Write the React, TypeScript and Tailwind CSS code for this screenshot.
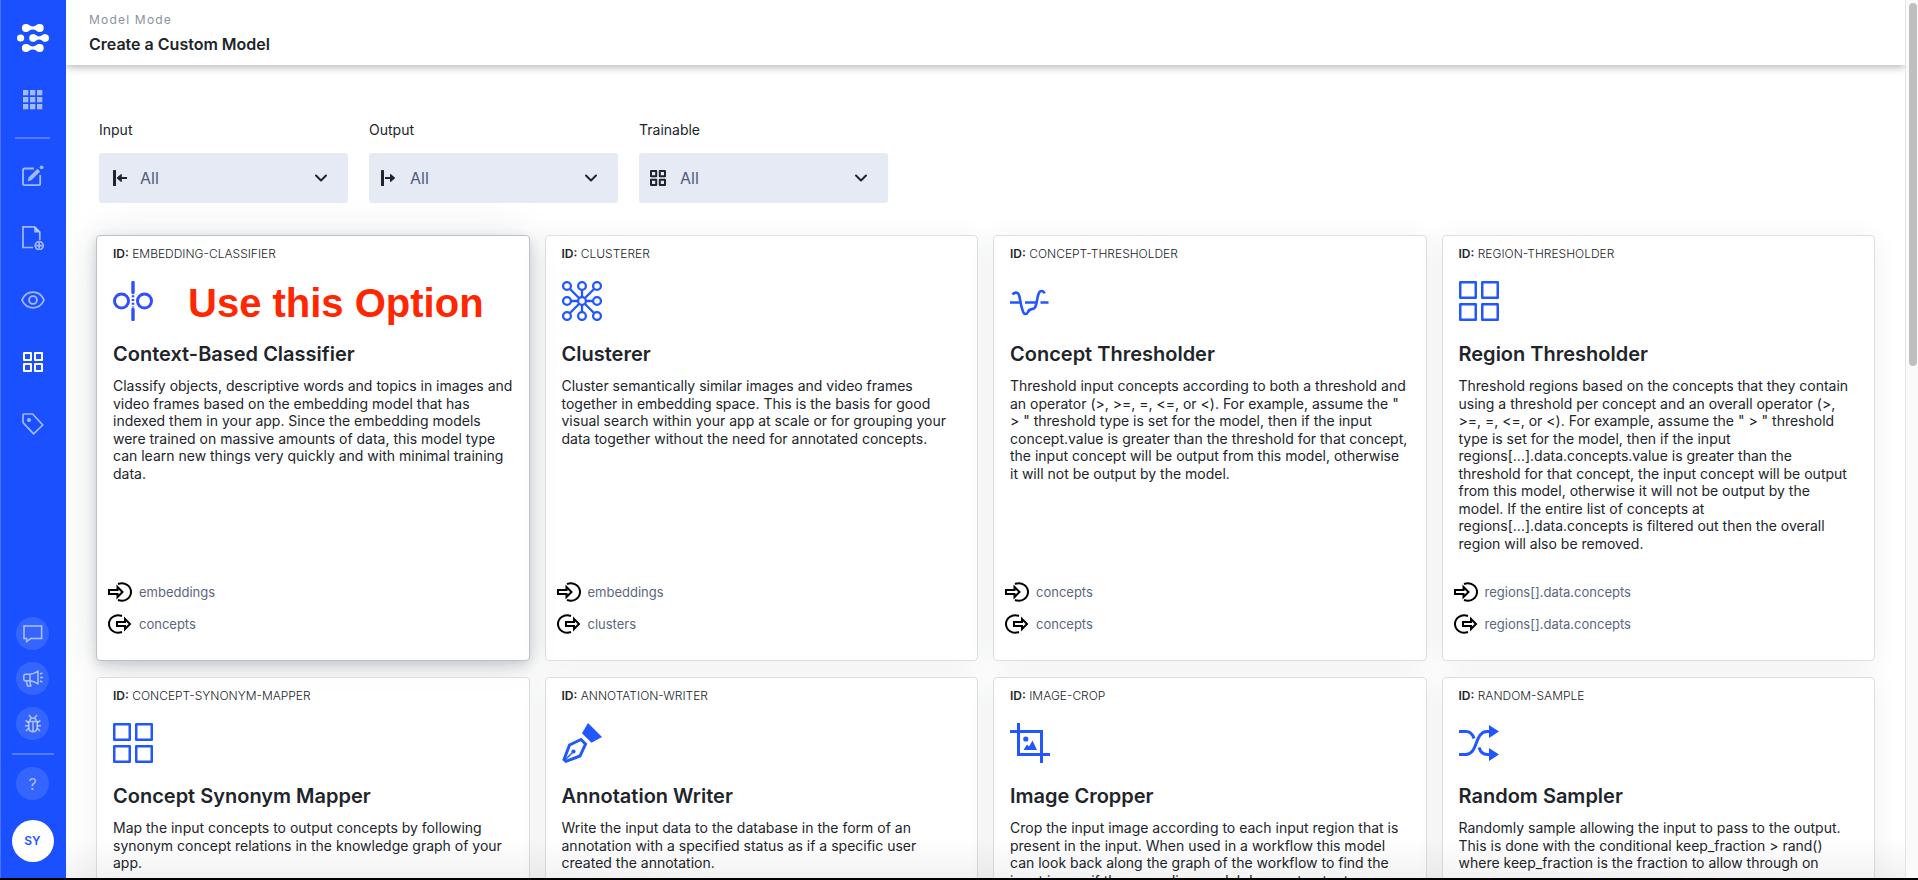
import type { ReactNode } from "react";

function Logo() {
  return (
    <svg width="32" height="28" viewBox="0 0 32 28" fill="#fff" aria-hidden="true">
      <circle cx="8.8" cy="4" r="3.9" />
      <circle cx="22.8" cy="4" r="3.9" />
      <circle cx="3.6" cy="14" r="3.6" />
      <circle cx="16" cy="14" r="3.8" />
      <circle cx="28.2" cy="14" r="3.8" />
      <circle cx="8.8" cy="24" r="3.9" />
      <circle cx="22.8" cy="24" r="3.9" />
      <path d="M9 .2C12 .2 13 2.4 15.8 2.4S19.6.2 22.6.2V7.8C19.6 7.8 18.6 5.6 15.8 5.6S12 7.8 9 7.8Z" />
      <path d="M16 10.3C18.6 10.3 19.6 12.4 22 12.4S25.6 10.3 28.2 10.3V17.7C25.6 17.7 24.6 15.6 22 15.6S18.6 17.7 16 17.7Z" />
      <path d="M9 20.2C12 20.2 13 22.4 15.8 22.4S19.6 20.2 22.6 20.2V27.8C19.6 27.8 18.6 25.6 15.8 25.6S12 27.8 9 27.8Z" />
    </svg>
  );
}

function AppsIcon() {
  return (
    <svg width="20" height="20" viewBox="0 0 20 20" fill="currentColor" aria-hidden="true">
      {[0, 7, 14].map((y) => [0, 7, 14].map((x) => <rect key={`${x}-${y}`} x={x} y={y} width="5.3" height="5.3" />))}
    </svg>
  );
}

function EditIcon() {
  return (
    <svg width="22" height="22" viewBox="0 0 22 22" fill="none" stroke="currentColor" strokeWidth="1.8" aria-hidden="true">
      <path d="M12 3.5H2.6A1.6 1.6 0 0 0 1 5.1V18.6A1.6 1.6 0 0 0 2.6 20.2H16.6A1.6 1.6 0 0 0 18.2 18.6V10" />
      <path d="M5.600 16.400l1.200-4.200L15.400 3.800l2.800 2.800L9.600 15z" fill="currentColor" stroke="none" />
      <circle cx="19.6" cy="2.3" r="1.9" fill="currentColor" stroke="none" />
    </svg>
  );
}

function DocIcon() {
  return (
    <svg width="22" height="24" viewBox="0 0 22 24" fill="none" stroke="currentColor" strokeWidth="1.7" aria-hidden="true">
      <path d="M11 21.5H1V.8H12.6L17.8 6V14" />
      <path d="M12.2.6v5.8H18z" fill="currentColor" stroke="none" />
      <circle cx="17.2" cy="19.6" r="4" />
      <path d="M17.2 16.6v6M14.2 19.6h6" />
    </svg>
  );
}

function EyeIcon() {
  return (
    <svg width="24" height="18" viewBox="0 0 24 18" fill="none" stroke="currentColor" strokeWidth="1.8" aria-hidden="true">
      <path d="M1 9C3.2 4 7.2 1.2 12 1.2S20.8 4 23 9C20.8 14 16.8 16.8 12 16.8S3.2 14 1 9Z" />
      <circle cx="12" cy="9" r="3.9" />
    </svg>
  );
}

function SquaresIcon({ size, stroke }: { size: number; stroke: number }) {
  const box = 10.8;
  const o = stroke / 2;
  return (
    <svg width={size} height={size} viewBox="0 0 24 24" fill="none" stroke="currentColor" strokeWidth={stroke} strokeLinejoin="round" aria-hidden="true">
      {[o, 24 - box + o].map((y) =>
        [o, 24 - box + o].map((x) => (
          <rect key={`${x}-${y}`} x={x} y={y} width={box - stroke} height={box - stroke} />
        )),
      )}
    </svg>
  );
}

function TagIcon() {
  return (
    <svg width="22" height="22" viewBox="0 0 22 22" fill="none" stroke="currentColor" strokeWidth="1.7" strokeLinejoin="round" aria-hidden="true">
      <path d="M1 1.8V9.6L11.6 20.8L20.8 12L10.6 1H1.8A.8.8 0 0 0 1 1.8Z" />
      <circle cx="7" cy="7" r="2" fill="currentColor" stroke="none" />
    </svg>
  );
}

function ChatIcon() {
  return (
    <svg width="20" height="18" viewBox="0 0 20 18" fill="none" stroke="currentColor" strokeWidth="1.5" aria-hidden="true">
      <path d="M1 1H18.6V13.6H7.6L3.6 16.6V13.6H1Z" />
    </svg>
  );
}

function HornIcon() {
  return (
    <svg width="20" height="17" viewBox="0 0 20 17" fill="none" stroke="currentColor" strokeWidth="1.5" strokeLinejoin="round" aria-hidden="true">
      <path d="M15 1V14C12 11.8 10 11 7 10.8H2.6Q.8 10.8.8 9V6Q.8 4.2 2.6 4.2H7C10 4 12 3.2 15 1ZM7 4.2V10.800M3.2 10.8L4.6 16H7.8L6.8 10.8" />
      <path d="M17 4l2.4-1M17 7.500h3M17 11l2.4 1" />
    </svg>
  );
}

function BugIcon() {
  return (
    <svg width="18" height="19" viewBox="0 0 18 19" fill="none" stroke="currentColor" strokeWidth="1.5" aria-hidden="true">
      <path d="M9 17.8C6.2 17.8 4.8 15.8 4.8 13V7.6H13.2V13C13.2 15.8 11.8 17.8 9 17.8ZM5.8 7.4C5.8 5.2 7 4 9 4S12.2 5.2 12.2 7.4M9 8V17.6M5 1L7.4 4M13 1L10.6 4" />
      <path d="M4.8 8.8L1.6 6.4M4.8 11.8H1M4.8 14.2L2 17M13.2 8.8L16.4 6.4M13.2 11.8H17M13.2 14.2L16 17" />
    </svg>
  );
}

function SideArrow({ out = false }: { out?: boolean }) {
  return (
    <svg width="18" height="16" viewBox="0 0 18 16" fill="currentColor" aria-hidden="true">
      <rect x={out ? 2 : 4} y="0" width="3" height="16" rx=".5" />
      {out ? (
        <path d="M6 7.100H11V4.400Q11 3.600 11.700 4.100L15.800 7.600Q16.200 8 15.800 8.400L11.700 11.900Q11 12.400 11 11.600V8.900H6Z" />
      ) : (
        <path d="M18 7.100H12.800V4.400Q12.800 3.600 12.100 4.100L8 7.600Q7.600 8 8 8.400L12.100 11.900Q12.800 12.400 12.800 11.600V8.900H18Z" />
      )}
    </svg>
  );
}

function ClassifierIcon() {
  return (
    <svg width="40" height="40" viewBox="0 0 40 40" fill="none" stroke="#2f4ffc" strokeWidth="3" aria-hidden="true">
      <circle cx="8.5" cy="20" r="7" />
      <circle cx="31.5" cy="20" r="7" />
      <path d="M20 1.500V11.500M20 28.500V38.500" strokeLinecap="round" strokeWidth="3.400" />
      <path d="M20 14.200V26.500" strokeDasharray="2 1.800" strokeWidth="2.600" />
    </svg>
  );
}

const nodes = [
  [5, 5], [20, 5], [35, 5],
  [5, 20], [20, 20], [35, 20],
  [5, 35], [20, 35], [35, 35],
];

function ClusterIcon() {
  return (
    <svg width="40" height="40" viewBox="0 0 40 40" fill="#fff" stroke="#2257ff" strokeWidth="2.300" aria-hidden="true">
      <path d="M5 5L35 35M35 5L5 35M20 5V35M5 20H35" />
      {nodes.map(([x, y]) => (
        <circle key={`${x}-${y}`} cx={x} cy={y} r="3.900" />
      ))}
    </svg>
  );
}

function ThresholdIcon() {
  return (
    <svg width="40" height="40" viewBox="0 0 40 40" fill="none" stroke="#2257ff" strokeWidth="2.600" aria-hidden="true">
      <path d="M0 21.500H11M15 21.500H27M30.500 21.500H38.500" strokeWidth="2.600" />
      <path d="M2.500 13.500C4 11.500 7.500 10.500 8.800 13.500C10.500 18 10.500 24 12.500 29C13.800 34 16.500 34 18 31C19.500 26.500 23 29.500 25 26.500C27 23 27 17 28.500 13C29.800 9 33.500 9 34.500 12.500" />
    </svg>
  );
}

function PenIcon() {
  return (
    <svg width="40" height="40" viewBox="0 0 40 40" fill="none" stroke="#2257ff" strokeWidth="3" aria-hidden="true">
      <path d="M26 0L40 14L29.5 19.8L20 10.3Z" fill="#2257ff" stroke="none" />
      <path d="M19 16.500L7.500 22L2 36.500L4 38.300L18 33L23.500 21Z" />
      <path d="M3 37L11 29" strokeWidth="1.400" />
      <circle cx="11.5" cy="28.5" r="2.100" fill="#2257ff" stroke="none" />
    </svg>
  );
}

function CropIcon() {
  return (
    <svg width="40" height="40" viewBox="0 0 40 40" fill="none" stroke="#2257ff" strokeWidth="3" aria-hidden="true">
      <path d="M0 8.500H31.500V40M8.500 0V31.500H40" />
      <circle cx="15.8" cy="16" r="2.600" fill="#2257ff" stroke="none" />
      <path d="M13.500 27L17 21.500L19 23.500L22.500 17.500L27 27Z" fill="#2257ff" stroke="none" />
    </svg>
  );
}

function ShuffleIcon() {
  return (
    <svg width="40" height="40" viewBox="0 0 40 40" fill="none" stroke="#2257ff" strokeWidth="3" aria-hidden="true">
      <path d="M0 8.500H7C11 8.500 13.500 11 15 15.500M0 31.500H7C19 31.500 15.500 8.500 28 8.500H31M20 24.500C21.500 29 24 31.500 28 31.500H31" />
      <path d="M30 2L40 8.500L30 15ZM30 25L40 31.500L30 38Z" fill="#2257ff" stroke="none" />
    </svg>
  );
}

function PortIcon({ out = false }: { out?: boolean }) {
  return (
    <svg width="24" height="20" viewBox="0 0 24 20" fill="none" stroke="#000" strokeWidth="2" aria-hidden="true">
      {out ? (
        <>
          <path d="M14 2C6.500-.5 1 4.500 1 10S6.500 20.500 14 18" />
          <path d="M9 8V12H17V15L22 10L17 5V8Z" />
        </>
      ) : (
        <>
          <path d="M10 2C17.500-.5 23 4.500 23 10S17.500 20.500 10 18" />
          <path d="M1 8V12H9.500V15L14.500 10L9.500 5V8Z" />
        </>
      )}
    </svg>
  );
}

type Model = {
  id: string;
  title: string;
  text: string;
  icon: ReactNode;
  input: string;
  output: string;
  active?: boolean;
  note?: string;
};

const squares = (
  <span className="text-[#2257ff]">
    <SquaresIcon size={40} stroke={1.5} />
  </span>
);

const models: Model[] = [
  {
    id: "EMBEDDING-CLASSIFIER",
    title: "Context-Based Classifier",
    text: "Classify objects, descriptive words and topics in images and video frames based on the embedding model that has indexed them in your app. Since the embedding models were trained on massive amounts of data, this model type can learn new things very quickly and with minimal training data.",
    icon: <ClassifierIcon />,
    input: "embeddings",
    output: "concepts",
    active: true,
    note: "Use this Option",
  },
  {
    id: "CLUSTERER",
    title: "Clusterer",
    text: "Cluster semantically similar images and video frames together in embedding space. This is the basis for good visual search within your app at scale or for grouping your data together without the need for annotated concepts.",
    icon: <ClusterIcon />,
    input: "embeddings",
    output: "clusters",
  },
  {
    id: "CONCEPT-THRESHOLDER",
    title: "Concept Thresholder",
    text: "Threshold input concepts according to both a threshold and an operator (>, >=, =, <=, or <). For example, assume the \" > \" threshold type is set for the model, then if the input concept.value is greater than the threshold for that concept, the input concept will be output from this model, otherwise it will not be output by the model.",
    icon: <ThresholdIcon />,
    input: "concepts",
    output: "concepts",
  },
  {
    id: "REGION-THRESHOLDER",
    title: "Region Thresholder",
    text: "Threshold regions based on the concepts that they contain using a threshold per concept and an overall operator (>, >=, =, <=, or <). For example, assume the \" > \" threshold type is set for the model, then if the input regions[...].data.concepts.value is greater than the threshold for that concept, the input concept will be output from this model, otherwise it will not be output by the model. If the entire list of concepts at regions[...].data.concepts is filtered out then the overall region will also be removed.",
    icon: squares,
    input: "regions[].data.concepts",
    output: "regions[].data.concepts",
  },
  {
    id: "CONCEPT-SYNONYM-MAPPER",
    title: "Concept Synonym Mapper",
    text: "Map the input concepts to output concepts by following synonym concept relations in the knowledge graph of your app.",
    icon: squares,
    input: "concepts",
    output: "concepts",
  },
  {
    id: "ANNOTATION-WRITER",
    title: "Annotation Writer",
    text: "Write the input data to the database in the form of an annotation with a specified status as if a specific user created the annotation.",
    icon: <PenIcon />,
    input: "concepts",
    output: "concepts",
  },
  {
    id: "IMAGE-CROP",
    title: "Image Cropper",
    text: "Crop the input image according to each input region that is present in the input. When used in a workflow this model can look back along the graph of the workflow to find the input image if the preceding model does not output an image.",
    icon: <CropIcon />,
    input: "image",
    output: "image",
  },
  {
    id: "RANDOM-SAMPLE",
    title: "Random Sampler",
    text: "Randomly sample allowing the input to pass to the output. This is done with the conditional keep_fraction > rand() where keep_fraction is the fraction to allow through on average.",
    icon: <ShuffleIcon />,
    input: "any",
    output: "any",
  },
];

function ModelCard({ model }: { model: Model }) {
  return (
    <article
      className={
        model.active
          ? "flex flex-col rounded-[4px] border border-[#bcc3cc] bg-white px-4 pt-[9px] pb-5 shadow-[0_4px_12px_rgba(30,50,70,0.2),0_4px_40px_rgba(40,50,60,0.14)]"
          : "flex flex-col rounded-[4px] border border-[#dcdee3] bg-white/80 px-4 pt-[9px] pb-5 shadow-[0_4px_28px_rgba(40,50,60,0.07)]"
      }
    >
      <p className="text-xs leading-[18px] font-light text-[#21252b]">
        <span className="font-semibold">ID:</span> {model.id}
      </p>
      <div className="mt-[18px] flex h-10 items-center gap-[35px]">
        {model.icon}
        {model.note && (
          <strong className="pt-1 font-['Liberation_Sans',Arial,sans-serif] text-[40px] leading-10 font-bold text-[#ff2600]">
            {model.note}
          </strong>
        )}
      </div>
      <h2 className="mt-[19px] text-xl leading-7 font-semibold text-[#21252b]">{model.title}</h2>
      <p className="mt-[9px] grow text-sm leading-tight text-[#21252b]">{model.text}</p>
      <ul className="-ml-[5px] pt-6 text-[13px] leading-5 text-[#5b6780]">
        <li className="flex h-8 items-center gap-[7px]">
          <PortIcon />
          {model.input}
        </li>
        <li className="flex h-8 items-center gap-[7px]">
          <PortIcon out />
          {model.output}
        </li>
      </ul>
    </article>
  );
}

function Filter({ id, label, icon }: { id: string; label: string; icon: ReactNode }) {
  return (
    <div className="w-[249px]">
      <label htmlFor={id} className="block text-sm leading-5 text-[#21252b]">
        {label}
      </label>
      <div className="mt-[13px] grid h-[50px] grid-cols-[38px_1fr_34px] items-center rounded-[3px] bg-[#e6eaf4]">
        <span className="col-start-1 row-start-1 flex justify-center text-[#21252b]">{icon}</span>
        <select
          id={id}
          className="col-span-3 col-start-1 row-start-1 h-full w-full appearance-none bg-transparent pl-[41px] text-base text-[#4d5b7c]"
        >
          <option>All</option>
        </select>
        <span className="pointer-events-none col-start-3 row-start-1">
          <svg width="14" height="9" viewBox="0 0 14 9" fill="none" stroke="#21252b" strokeWidth="2" strokeLinecap="round" strokeLinejoin="round" aria-hidden="true">
            <path d="M2 1.500L7 6.500L12 1.500" />
          </svg>
        </span>
      </div>
    </div>
  );
}

function NavLink({ label, className, children }: { label: string; className: string; children: ReactNode }) {
  return (
    <a href="#" aria-label={label} className={className}>
      {children}
    </a>
  );
}

const navItem = "flex h-[62px] w-full items-center justify-center text-white/60";
const roundItem = "flex size-[33px] items-center justify-center rounded-full bg-white/12 text-white/60";

function Sidebar() {
  return (
    <nav className="flex w-[66px] shrink-0 flex-col items-center border-l border-[#4a73ff] bg-[#1a50ff] pr-0.5">
      <NavLink label="Home" className="mt-6 flex h-7 items-center">
        <Logo />
      </NavLink>
      <NavLink label="Apps" className="mt-[38px] flex h-5 items-center text-white/60">
        <AppsIcon />
      </NavLink>
      <hr className="mt-[27px] mb-[6px] w-[35px] border-t-2 border-white/25" />
      <NavLink label="Edit" className={navItem}><EditIcon /></NavLink>
      <NavLink label="Documents" className={navItem}><DocIcon /></NavLink>
      <NavLink label="Explorer" className={navItem}><EyeIcon /></NavLink>
      <NavLink label="Model Mode" className="flex h-[62px] w-full items-center justify-center text-white">
        <SquaresIcon size={20} stroke={2.4} />
      </NavLink>
      <NavLink label="Labels" className={navItem}><TagIcon /></NavLink>
      <div className="mt-auto flex flex-col items-center gap-3 pb-4">
        <NavLink label="Chat" className={roundItem}><ChatIcon /></NavLink>
        <NavLink label="News" className={roundItem}><HornIcon /></NavLink>
        <NavLink label="Report a bug" className={roundItem}><BugIcon /></NavLink>
        <hr className="mt-px w-[42px] border-t-2 border-white/25" />
        <a href="#" className="flex size-[33px] items-center justify-center rounded-full bg-white/12 text-base text-white/60">?</a>
        <button type="button" className="mt-2 size-[42px] rounded-full bg-white text-xs font-semibold text-[#2257ff]">SY</button>
      </div>
    </nav>
  );
}

export default function App() {
  return (
    <div className="flex h-screen overflow-hidden border-b-2 border-black bg-white font-[Inter,'Liberation_Sans',sans-serif]">
      <Sidebar />
      <div className="relative flex min-w-0 grow flex-col overflow-hidden">
        <header className="z-10 h-[65px] shrink-0 bg-white pt-3 pl-[23px] shadow-[0_2px_8px_rgba(0,0,0,0.3)]">
          <p className="text-xs leading-4 tracking-widest text-[#8a93a5]">Model Mode</p>
          <h1 className="mt-1 text-base leading-6 font-semibold text-[#21252b]">Create a Custom Model</h1>
        </header>
        <main className="min-h-0 grow overflow-hidden pt-[55px] pr-[30px] pl-[30px]">
          <div className="ml-[3px] flex gap-[21px]">
            <Filter id="input" label="Input" icon={<SideArrow />} />
            <Filter id="output" label="Output" icon={<SideArrow out />} />
            <Filter id="trainable" label="Trainable" icon={<SquaresIcon size={16} stroke={3} />} />
          </div>
          <div className="mt-8 grid grid-cols-4 gap-x-[15px] gap-y-4">
            {models.map((m) => (
              <ModelCard key={m.id} model={m} />
            ))}
          </div>
        </main>
        <div className="pointer-events-none absolute inset-x-0 bottom-0 h-10 bg-linear-to-b from-transparent to-black/5" />
      </div>
      <div className="w-[13px] shrink-0 border-l border-[#e4e4e4] bg-[#fafafa] py-[3px] pl-[3px]">
        <div className="h-[363px] w-2 rounded-full bg-[#bfbfbf]" />
      </div>
    </div>
  );
}
